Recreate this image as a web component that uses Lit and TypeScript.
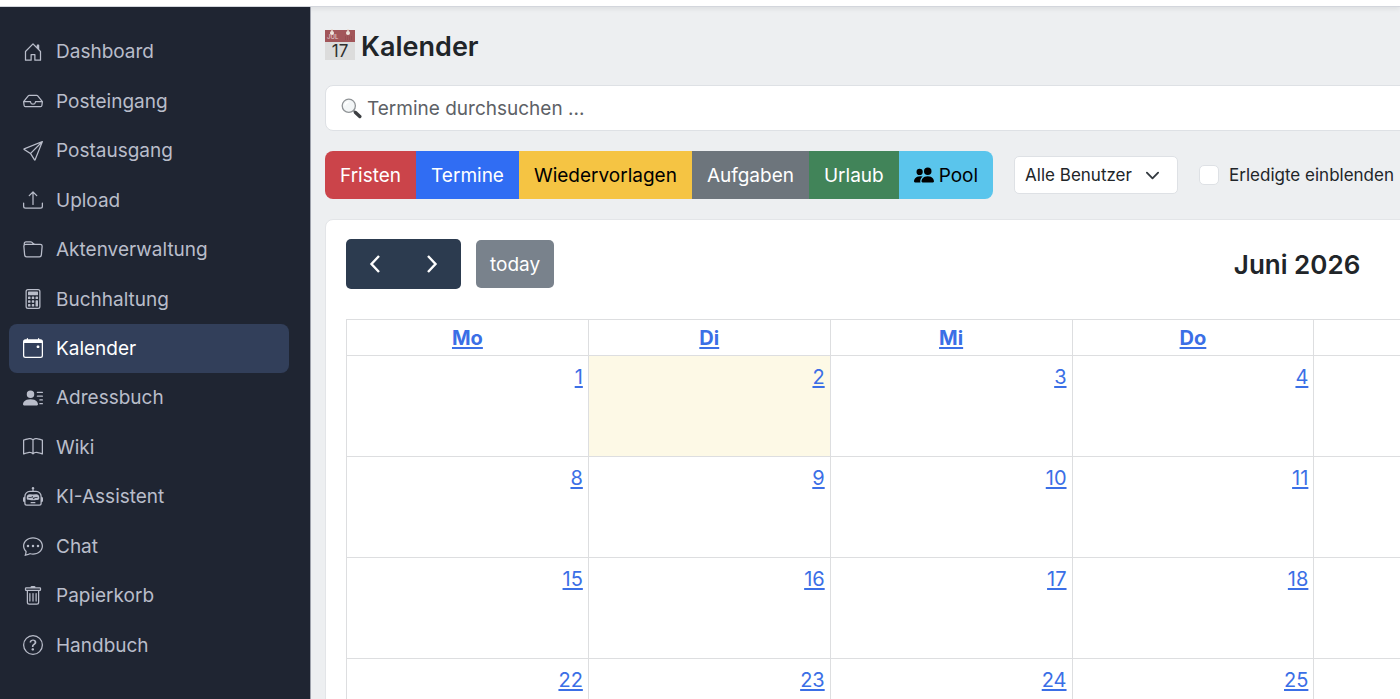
import { LitElement, html, css, svg } from "lit";
import { customElement, property, state } from "lit/decorators.js";
import { classMap } from "lit/directives/class-map.js";

const ICONS: Record<string, string[]> = {
  house: [
    "M8.354 1.146a.5.5 0 0 0-.708 0l-6 6A.5.5 0 0 0 1.5 7.5v7a.5.5 0 0 0 .5.5h4.5a.5.5 0 0 0 .5-.5v-4h2v4a.5.5 0 0 0 .5.5H14a.5.5 0 0 0 .5-.5v-7a.5.5 0 0 0-.146-.354L13 5.793V2.5a.5.5 0 0 0-.5-.5h-1a.5.5 0 0 0-.5.5v1.293zM2.5 14V7.707l5.5-5.5 5.5 5.5V14H10v-4a.5.5 0 0 0-.5-.5h-3a.5.5 0 0 0-.5.5v4z",
  ],
  inbox: [
    "M4.98 4a.5.5 0 0 0-.39.188L1.54 8H6a.5.5 0 0 1 .5.5 1.5 1.5 0 1 0 3 0A.5.5 0 0 1 10 8h4.46l-3.05-3.812A.5.5 0 0 0 11.02 4zm9.954 5H10.45a2.5 2.5 0 0 1-4.9 0H1.066l.32 2.562a.5.5 0 0 0 .497.438h12.234a.5.5 0 0 0 .496-.438zM3.809 3.563A1.5 1.5 0 0 1 4.981 3h6.038a1.5 1.5 0 0 1 1.172.563l3.7 4.625a.5.5 0 0 1 .105.374l-.39 3.124A1.5 1.5 0 0 1 14.117 13H1.883a1.5 1.5 0 0 1-1.489-1.314l-.39-3.124a.5.5 0 0 1 .106-.374z",
  ],
  send: [
    "M15.854.146a.5.5 0 0 1 .11.54l-5.819 14.547a.75.75 0 0 1-1.329.124l-3.178-4.995L.643 7.184a.75.75 0 0 1 .124-1.33L15.314.037a.5.5 0 0 1 .54.11ZM6.636 10.07l2.761 4.338L14.13 2.576zm6.787-8.201L1.591 6.602l4.339 2.76z",
  ],
  upload: [
    "M.5 9.9a.5.5 0 0 1 .5.5v2.5a1 1 0 0 0 1 1h12a1 1 0 0 0 1-1v-2.5a.5.5 0 0 1 1 0v2.5a2 2 0 0 1-2 2H2a2 2 0 0 1-2-2v-2.5a.5.5 0 0 1 .5-.5",
    "M7.646 1.146a.5.5 0 0 1 .708 0l3 3a.5.5 0 0 1-.708.708L8.5 2.707V11.5a.5.5 0 0 1-1 0V2.707L5.354 4.854a.5.5 0 1 1-.708-.708z",
  ],
  folder: [
    "M.54 3.87.5 3a2 2 0 0 1 2-2h3.672a2 2 0 0 1 1.414.586l.828.828A2 2 0 0 0 9.828 3h3.982a2 2 0 0 1 1.992 2.181l-.637 7A2 2 0 0 1 13.174 14H2.826a2 2 0 0 1-1.991-1.819l-.637-7a2 2 0 0 1 .342-1.31zM2.19 4a1 1 0 0 0-.996 1.09l.637 7a1 1 0 0 0 .995.91h10.348a1 1 0 0 0 .995-.91l.637-7A1 1 0 0 0 13.81 4zm4.69-1.707A1 1 0 0 0 6.172 2H2.5a1 1 0 0 0-1 .981l.006.139q.323-.119.684-.12h5.396z",
  ],
  calculator: [
    "M12 1a1 1 0 0 1 1 1v12a1 1 0 0 1-1 1H4a1 1 0 0 1-1-1V2a1 1 0 0 1 1-1zM4 0a2 2 0 0 0-2 2v12a2 2 0 0 0 2 2h8a2 2 0 0 0 2-2V2a2 2 0 0 0-2-2z",
    "M4 2.5a.5.5 0 0 1 .5-.5h7a.5.5 0 0 1 .5.5v2a.5.5 0 0 1-.5.5h-7a.5.5 0 0 1-.5-.5zm0 4a.5.5 0 0 1 .5-.5h1a.5.5 0 0 1 .5.5v1a.5.5 0 0 1-.5.5h-1a.5.5 0 0 1-.5-.5zm0 3a.5.5 0 0 1 .5-.5h1a.5.5 0 0 1 .5.5v1a.5.5 0 0 1-.5.5h-1a.5.5 0 0 1-.5-.5zm0 3a.5.5 0 0 1 .5-.5h1a.5.5 0 0 1 .5.5v1a.5.5 0 0 1-.5.5h-1a.5.5 0 0 1-.5-.5zm3-6a.5.5 0 0 1 .5-.5h1a.5.5 0 0 1 .5.5v1a.5.5 0 0 1-.5.5h-1a.5.5 0 0 1-.5-.5zm0 3a.5.5 0 0 1 .5-.5h1a.5.5 0 0 1 .5.5v1a.5.5 0 0 1-.5.5h-1a.5.5 0 0 1-.5-.5zm0 3a.5.5 0 0 1 .5-.5h1a.5.5 0 0 1 .5.5v1a.5.5 0 0 1-.5.5h-1a.5.5 0 0 1-.5-.5zm3-6a.5.5 0 0 1 .5-.5h1a.5.5 0 0 1 .5.5v1a.5.5 0 0 1-.5.5h-1a.5.5 0 0 1-.5-.5zm0 3a.5.5 0 0 1 .5-.5h1a.5.5 0 0 1 .5.5v4a.5.5 0 0 1-.5.5h-1a.5.5 0 0 1-.5-.5z",
  ],
  calendar: [
    "M11 6.5a.5.5 0 0 1 .5-.5h1a.5.5 0 0 1 .5.5v1a.5.5 0 0 1-.5.5h-1a.5.5 0 0 1-.5-.5z",
    "M3.5 0a.5.5 0 0 1 .5.5V1h8V.5a.5.5 0 0 1 1 0V1h1a2 2 0 0 1 2 2v11a2 2 0 0 1-2 2H2a2 2 0 0 1-2-2V3a2 2 0 0 1 2-2h1V.5a.5.5 0 0 1 .5-.5M1 4v10a1 1 0 0 0 1 1h12a1 1 0 0 0 1-1V4z",
  ],
  contacts: [
    "M6 8a3 3 0 1 0 0-6 3 3 0 0 0 0 6m-5 6s-1 0-1-1 1-4 6-4 6 3 6 4-1 1-1 1zM11 3.5a.5.5 0 0 1 .5-.5h4a.5.5 0 0 1 0 1h-4a.5.5 0 0 1-.5-.5m.5 2.5a.5.5 0 0 0 0 1h4a.5.5 0 0 0 0-1zm2 3a.5.5 0 0 0 0 1h2a.5.5 0 0 0 0-1zm0 3a.5.5 0 0 0 0 1h2a.5.5 0 0 0 0-1z",
  ],
  book: [
    "M1 2.828c.885-.37 2.154-.769 3.388-.893 1.33-.134 2.458.063 3.112.752v9.746c-.935-.53-2.12-.603-3.213-.493-1.18.12-2.37.461-3.287.811zm7.5-.141c.654-.689 1.782-.886 3.112-.752 1.234.124 2.503.523 3.388.893v9.923c-.918-.35-2.107-.692-3.287-.81-1.094-.111-2.278-.039-3.213.492zM8 1.783C7.015.936 5.587.81 4.287.94c-1.514.153-3.042.672-3.994 1.105A.5.5 0 0 0 0 2.5v11a.5.5 0 0 0 .707.455c.882-.4 2.303-.881 3.68-1.02 1.409-.142 2.59.087 3.223.877a.5.5 0 0 0 .78 0c.633-.79 1.814-1.019 3.222-.877 1.378.139 2.8.62 3.681 1.02A.5.5 0 0 0 16 13.5v-11a.5.5 0 0 0-.293-.455c-.952-.433-2.48-.952-3.994-1.105C10.413.809 8.985.936 8 1.783",
  ],
  robot: [
    "M6 12.5a.5.5 0 0 1 .5-.5h3a.5.5 0 0 1 0 1h-3a.5.5 0 0 1-.5-.5M3 8.062C3 6.76 4.235 5.765 5.53 5.886a26.6 26.6 0 0 0 4.94 0C11.765 5.765 13 6.76 13 8.062v1.157a.93.93 0 0 1-.765.935c-.845.147-2.34.346-4.235.346s-3.39-.2-4.235-.346A.93.93 0 0 1 3 9.219zm4.542-.827a.25.25 0 0 0-.217.068l-.92.9a25 25 0 0 1-1.871-.183.25.25 0 0 0-.068.495c.55.076 1.232.149 2.02.193a.25.25 0 0 0 .189-.071l.754-.736.847 1.71a.25.25 0 0 0 .404.062l.932-.97a25 25 0 0 0 1.922-.188.25.25 0 0 0-.068-.495c-.538.074-1.207.145-1.98.189a.25.25 0 0 0-.166.076l-.754.785-.842-1.7a.25.25 0 0 0-.182-.135",
    "M8.5 1.866a1 1 0 1 0-1 0V3h-2A4.5 4.5 0 0 0 1 7.5V8a1 1 0 0 0-1 1v2a1 1 0 0 0 1 1v1a2 2 0 0 0 2 2h10a2 2 0 0 0 2-2v-1a1 1 0 0 0 1-1V9a1 1 0 0 0-1-1v-.5A4.5 4.5 0 0 0 10.5 3h-2zM14 7.5V13a1 1 0 0 1-1 1H3a1 1 0 0 1-1-1V7.5A3.5 3.5 0 0 1 5.5 4h5A3.5 3.5 0 0 1 14 7.5",
  ],
  chat: [
    "M5 8a1 1 0 1 1-2 0 1 1 0 0 1 2 0m4 0a1 1 0 1 1-2 0 1 1 0 0 1 2 0m3 1a1 1 0 1 0 0-2 1 1 0 0 0 0 2",
    "m2.165 15.803.02-.004c1.83-.363 2.948-.842 3.468-1.105A9 9 0 0 0 8 15c4.418 0 8-3.134 8-7s-3.582-7-8-7-8 3.134-8 7c0 1.76.743 3.37 1.97 4.6a10.4 10.4 0 0 1-.524 2.318l-.003.011a11 11 0 0 1-.244.637c-.079.186.074.394.273.362a22 22 0 0 0 .693-.125m.8-3.108a1 1 0 0 0-.287-.801C1.618 10.83 1 9.468 1 8c0-3.192 3.004-6 7-6s7 2.808 7 6-3.004 6-7 6a8 8 0 0 1-2.088-.272 1 1 0 0 0-.711.074c-.387.196-1.24.57-2.634.893a11 11 0 0 0 .398-2",
  ],
  trash: [
    "M5.5 5.5A.5.5 0 0 1 6 6v6a.5.5 0 0 1-1 0V6a.5.5 0 0 1 .5-.5m2.5 0a.5.5 0 0 1 .5.5v6a.5.5 0 0 1-1 0V6a.5.5 0 0 1 .5-.5m3 .5a.5.5 0 0 0-1 0v6a.5.5 0 0 0 1 0z",
    "M14.5 3a1 1 0 0 1-1 1H13v9a2 2 0 0 1-2 2H5a2 2 0 0 1-2-2V4h-.5a1 1 0 0 1-1-1V2a1 1 0 0 1 1-1H6a1 1 0 0 1 1-1h2a1 1 0 0 1 1 1h3.5a1 1 0 0 1 1 1zM4.118 4 4 4.059V13a1 1 0 0 0 1 1h6a1 1 0 0 0 1-1V4.059L11.882 4zM2.5 3h11V2h-11z",
  ],
  question: [
    "M8 15A7 7 0 1 1 8 1a7 7 0 0 1 0 14m0 1A8 8 0 1 0 8 0a8 8 0 0 0 0 16",
    "M5.255 5.786a.237.237 0 0 0 .241.247h.825c.138 0 .248-.113.266-.25.09-.656.54-1.134 1.342-1.134.686 0 1.314.343 1.314 1.168 0 .635-.374.927-.965 1.371-.673.489-1.206 1.06-1.168 1.987l.003.217a.25.25 0 0 0 .25.246h.811a.25.25 0 0 0 .25-.25v-.105c0-.718.273-.927 1.01-1.486.609-.463 1.244-.977 1.244-2.056 0-1.511-1.276-2.241-2.673-2.241-1.267 0-2.655.59-2.75 2.286m1.557 5.763c0 .533.425.927 1.01.927.609 0 1.028-.394 1.028-.927 0-.552-.42-.94-1.029-.94-.584 0-1.009.388-1.009.94",
  ],
  people: [
    "M7 14s-1 0-1-1 1-4 5-4 5 3 5 4-1 1-1 1zm4-6a3 3 0 1 0 0-6 3 3 0 0 0 0 6m-5.784 6A2.24 2.24 0 0 1 5 13c0-1.355.68-2.75 1.936-3.72A6.3 6.3 0 0 0 5 9c-4 0-5 3-5 4s1 1 1 1zM4.5 8a2.5 2.5 0 1 0 0-5 2.5 2.5 0 0 0 0 5",
  ],
};

@customElement("app-icon")
export class AppIcon extends LitElement {
  static styles = css`
    :host {
      display: block;
      flex: none;
      width: 20px;
      height: 20px;
    }
    .glyph {
      display: block;
      width: 100%;
      height: 100%;
      fill: currentColor;
    }
  `;

  @property() name = "";

  render() {
    return html`<svg class="glyph" viewBox="0 0 16 16" aria-hidden="true">
      ${(ICONS[this.name] ?? []).map((d) => svg`<path d=${d}></path>`)}
    </svg>`;
  }
}

const NAV = [
  ["house", "Dashboard"],
  ["inbox", "Posteingang"],
  ["send", "Postausgang"],
  ["upload", "Upload"],
  ["folder", "Aktenverwaltung"],
  ["calculator", "Buchhaltung"],
  ["calendar", "Kalender"],
  ["contacts", "Adressbuch"],
  ["book", "Wiki"],
  ["robot", "KI-Assistent"],
  ["chat", "Chat"],
  ["trash", "Papierkorb"],
  ["question", "Handbuch"],
];

@customElement("app-sidebar")
export class AppSidebar extends LitElement {
  static styles = css`
    :host {
      display: block;
      flex: none;
      box-sizing: border-box;
      width: 311px;
      padding: 20px 21px 29px 9px;
      background: #1f2532;
      border-right: 1px solid #9da1ab;
    }
    .list {
      display: grid;
      grid-auto-rows: 1fr;
      height: 100%;
    }
    .link {
      display: flex;
      align-items: center;
      gap: 13px;
      padding: 0 14px;
      border-radius: 8px;
      color: #b9bdca;
      font-size: 19px;
      line-height: 25px;
      text-decoration: none;
    }
    .active {
      background: #323f5a;
      color: #fff;
    }
  `;

  @property() current = "";

  render() {
    return html`<nav class="list" aria-label="Hauptmenü">
      ${NAV.map(
        ([icon, label]) => html`<a
          href="#"
          class=${classMap({ link: true, active: label === this.current })}
          ><app-icon name=${icon}></app-icon>${label}</a
        >`,
      )}
    </nav>`;
  }
}

const DAYS = ["Mo", "Di", "Mi", "Do", "Fr", "Sa", "So"];

@customElement("month-calendar")
export class MonthCalendar extends LitElement {
  static styles = css`
    :host {
      display: block;
      padding: 19px 20px;
      background: #fff;
      border: 1px solid #e3e5e8;
      border-radius: 8px;
    }
    .toolbar {
      display: flex;
      align-items: center;
      justify-content: space-between;
      margin-bottom: 30px;
    }
    .side {
      display: flex;
      align-items: center;
      gap: 15px;
    }
    .pair {
      display: flex;
    }
    .step {
      display: grid;
      place-items: center;
      width: 57px;
      height: 50px;
      padding: 0;
      border: 0;
      background: #2c3b4f;
      color: #fff;
    }
    .step:first-child {
      border-radius: 5px 0 0 5px;
    }
    .step:last-child {
      border-radius: 0 5px 5px 0;
      width: 58px;
    }
    .chevron {
      width: 20px;
      height: 20px;
      fill: none;
      stroke: currentColor;
      stroke-width: 2.4;
    }
    .today {
      height: 48px;
      padding: 0 14px;
      border: 0;
      border-radius: 5px;
      background: #79828c;
      color: #fff;
      font: inherit;
      font-size: 19px;
      line-height: 25px;
    }
    .title {
      margin: 0;
      font-size: 26px;
      line-height: 33px;
      font-weight: 600;
    }
    .grid {
      width: 100%;
      border-collapse: collapse;
      table-layout: fixed;
    }
    .head,
    .day {
      border: 1px solid #dddee0;
      padding: 0;
      line-height: 24px;
    }
    .head {
      height: 35px;
      font-weight: 700;
    }
    .day {
      height: 100px;
      vertical-align: top;
      text-align: right;
    }
    .number {
      display: inline-block;
      padding: 9px 5px 0;
    }
    .current {
      background: #fdf9e6;
    }
    .link {
      color: #3b6fe6;
      text-decoration: underline;
      text-underline-offset: 2px;
    }
  `;

  @state() private weeks = [0, 1, 2, 3, 4].map((w) =>
    DAYS.map((_, d) => w * 7 + d + 1),
  );

  render() {
    return html`
      <div class="toolbar">
        <div class="side">
          <div class="pair">
            <button class="step" aria-label="Zurück">
              <svg class="chevron" viewBox="0 0 20 20">
                <path d="M14 2 6.5 10 14 18"></path>
              </svg>
            </button>
            <button class="step" aria-label="Weiter">
              <svg class="chevron" viewBox="0 0 20 20">
                <path d="M6 2 13.5 10 6 18"></path>
              </svg>
            </button>
          </div>
          <button class="today">today</button>
        </div>
        <h2 class="title">Juni 2026</h2>
        <div class="side"></div>
      </div>
      <table class="grid">
        <thead>
          <tr>
            ${DAYS.map(
              (d) =>
                html`<th class="head"><a class="link" href="#">${d}</a></th>`,
            )}
          </tr>
        </thead>
        <tbody>
          ${this.weeks.map(
            (week) =>
              html`<tr>
                ${week.map(
                  (n) =>
                    html`<td class=${classMap({ day: true, current: n === 2 })}>
                      ${n <= 30
                        ? html`<a class="link number" href="#">${n}</a>`
                        : ""}
                    </td>`,
                )}
              </tr>`,
          )}
        </tbody>
      </table>
    `;
  }
}

const FILTERS = [
  { label: "Fristen", tone: "red" },
  { label: "Termine", tone: "blue" },
  { label: "Wiedervorlagen", tone: "yellow" },
  { label: "Aufgaben", tone: "gray" },
  { label: "Urlaub", tone: "green" },
  { label: "Pool", tone: "cyan", icon: "people" },
];

@customElement("app-root")
export class AppRoot extends LitElement {
  static styles = css`
    :host {
      display: flex;
      flex-direction: column;
      height: 100vh;
      overflow: hidden;
      font-family: Inter, "Liberation Sans", sans-serif;
      font-size: 20px;
      line-height: 24px;
      color: #212529;
      background: #edeff1;
    }
    .topbar {
      flex: none;
      height: 6px;
      background: #fff;
      border-bottom: 1px solid #d3d6dc;
      box-shadow: 0 2px 5px rgba(0, 0, 0, 0.07);
    }
    .body {
      flex: 1;
      display: flex;
      min-height: 0;
    }
    .main {
      flex: 1;
      min-width: 0;
      padding: 22px 14px;
      overflow: auto;
      scrollbar-width: none;
    }
    .content {
      display: flex;
      flex-direction: column;
      gap: 20px;
      min-width: 1736px;
    }
    .heading {
      display: flex;
      align-items: center;
      gap: 6px;
      margin: 0 0 1px;
      font-size: 27px;
      line-height: 35px;
      font-weight: 600;
    }
    .page-icon {
      align-self: flex-start;
      width: 30px;
      height: 32px;
    }
    .page-icon-day {
      font: 400 17px Inter, sans-serif;
      fill: #2f2f2f;
    }
    .page-icon-month {
      font: 500 6px Inter, sans-serif;
      fill: #e3c9ca;
    }
    .search {
      display: flex;
      align-items: center;
      gap: 5px;
      height: 44px;
      padding: 0 15px;
      background: #fff;
      border: 1px solid #dee1e5;
      border-radius: 8px;
    }
    .lens {
      flex: none;
      width: 21px;
      height: 21px;
    }
    .query {
      flex: 1;
      min-width: 0;
      height: 25px;
      padding: 0;
      border: 0;
      outline: 0;
      background: none;
      color: inherit;
      font: inherit;
      font-size: 19px;
      line-height: 25px;
    }
    .query::placeholder {
      color: #5d6166;
      opacity: 1;
    }
    .filters {
      display: flex;
      align-items: center;
      gap: 21px;
    }
    .group {
      display: flex;
      overflow: hidden;
      border-radius: 8px;
    }
    .filter {
      display: flex;
      align-items: center;
      gap: 5px;
      height: 48px;
      padding: 0 15px;
      border: 0;
      color: #fff;
      font: inherit;
      font-size: 19px;
      line-height: 25px;
    }
    .red {
      background: #cb444a;
    }
    .blue {
      background: #306df3;
    }
    .yellow {
      background: #f5c443;
      color: #000;
    }
    .gray {
      background: #6d757c;
    }
    .green {
      background: #418459;
    }
    .cyan {
      background: #5ac5ec;
      color: #000;
    }
    .users {
      appearance: none;
      height: 38px;
      padding: 0 45px 0 10px;
      border: 1px solid #dee1e5;
      border-radius: 5px;
      color: inherit;
      font: inherit;
      font-size: 17px;
      background: #fff
        url("data:image/svg+xml,%3Csvg xmlns='http://www.w3.org/2000/svg' viewBox='0 0 16 16'%3E%3Cpath fill='none' stroke='%23343a40' stroke-linecap='round' stroke-linejoin='round' stroke-width='2' d='m2 5 6 6 6-6'/%3E%3C/svg%3E")
        right 17px center / 15px 15px no-repeat;
    }
    .check {
      display: flex;
      align-items: center;
      gap: 10px;
      font-size: 17px;
      line-height: 25px;
    }
    .box {
      appearance: none;
      width: 20px;
      height: 20px;
      margin: 0;
      border: 1px solid #dee1e5;
      border-radius: 5px;
      background: #fff;
    }
    .box:checked {
      background: #306df3;
    }
  `;

  render() {
    return html`
      <header class="topbar"></header>
      <div class="body">
        <app-sidebar current="Kalender"></app-sidebar>
        <main class="main">
          <div class="content">
            <h1 class="heading">
              <svg class="page-icon" viewBox="0 0 30 32" aria-hidden="true">
                <rect x="0" y="1" width="30" height="30" fill="#dcdcdc"></rect>
                <rect x="0" y="1" width="30" height="12" fill="#a2565a"></rect>
                <circle cx="7" cy="4" r="2" fill="#f1e9e2"></circle>
                <circle cx="23" cy="4" r="2" fill="#f1e9e2"></circle>
                <path
                  d="M7 0v4M23 0v4"
                  stroke="#e8dcd2"
                  stroke-width="1.4"
                ></path>
                <path
                  d="M20 8h7M20 10h7"
                  stroke="#8c474b"
                  stroke-width="1"
                  stroke-dasharray="1 1"
                ></path>
                <text class="page-icon-month" x="2" y="10">JUL</text>
                <text class="page-icon-day" x="15" y="28" text-anchor="middle">
                  17
                </text>
              </svg>
              Kalender
            </h1>
            <label class="search">
              <svg class="lens" viewBox="0 0 21 21" aria-hidden="true">
                <path
                  d="m12.5 12.5 2.2 2.2"
                  stroke="#8a8d90"
                  stroke-width="2"
                ></path>
                <path
                  d="m14.5 14.5 4.3 4"
                  stroke="#3c3f42"
                  stroke-width="3.4"
                  stroke-linecap="round"
                ></path>
                <circle
                  cx="7.8"
                  cy="7.8"
                  r="6.6"
                  fill="#f3f6f7"
                  stroke="#8f9396"
                  stroke-width="1.3"
                ></circle>
                <path
                  d="M4 7.5A4 4 0 0 1 7.5 4"
                  fill="none"
                  stroke="#fff"
                  stroke-width="1.4"
                ></path>
              </svg>
              <input
                class="query"
                type="text"
                aria-label="Termine durchsuchen"
                placeholder="Termine durchsuchen ..."
              />
            </label>
            <div class="filters">
              <div class="group">
                ${FILTERS.map(
                  (f) =>
                    html`<button class="filter ${f.tone}">
                      ${f.icon
                        ? html`<app-icon name=${f.icon}></app-icon>`
                        : ""}${f.label}
                    </button>`,
                )}
              </div>
              <select class="users" aria-label="Benutzer">
                <option>Alle Benutzer</option>
              </select>
              <label class="check">
                <input class="box" type="checkbox" />Erledigte einblenden
              </label>
            </div>
            <month-calendar></month-calendar>
          </div>
        </main>
      </div>
    `;
  }
}
